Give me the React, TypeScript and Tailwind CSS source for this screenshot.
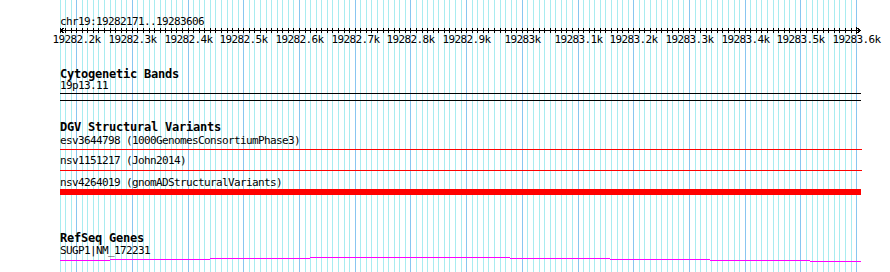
import React from "react";

const START = 19282170;
const SCALE = 0.5571;
const X0 = 60;
const px = (pos: number) => Math.floor(X0 + (pos - START) * SCALE);

const gridPositions = Array.from({ length: 144 }, (_, i) => START + i * 10);
const majorPositions = Array.from({ length: 15 }, (_, i) => 19282200 + i * 100);
const labelFor = (p: number) => {
  const k = p / 1000;
  return p % 1000 === 0 ? `${k}k` : `${k.toFixed(1)}k`;
};

const geneSegments: [number, number, number][] = [
  [60, 110, 4],
  [110, 210, 3],
  [210, 310, 2],
  [310, 410, 1],
  [410, 510, 1],
  [510, 610, 2],
  [610, 710, 3],
  [710, 810, 4],
  [810, 861, 5],
];

const txt = "h-[10px] text-[11px] leading-[10px] tracking-[-0.62px] whitespace-pre";
const ttl = "h-[11px] text-[12px] leading-[11px] tracking-[-0.22px] font-bold whitespace-pre";

export default function App() {
  return (
    <div className="relative w-[890px] h-[272px] bg-white overflow-hidden font-['DejaVu_Sans_Mono',monospace] text-black">
      {/* grid canvas */}
      <svg
        className="absolute inset-0"
        width={890}
        height={272}
        shapeRendering="crispEdges"
      >
        {gridPositions.map((p) => (
          <rect
            key={p}
            x={px(p)}
            y={0}
            width={1}
            height={272}
            fill={p % 100 === 0 ? "#88c6f0" : "#a8ecf0"}
          />
        ))}
      </svg>

      <div className="relative flex flex-col">
        {/* locus */}
        <div className={`mt-[17px] pl-[60px] ${txt}`}>chr19:19282171..19283606</div>
        {/* ruler */}
        <svg width={890} height={8} className="block" shapeRendering="crispEdges">
          <rect x={60} y={3} width={801} height={1} fill="#000" />
          {gridPositions.map((p) => (
            <rect key={p} x={px(p)} y={1} width={1} height={5} fill="#000" />
          ))}
          <path
            d="M60.5 3.5 L64.5 0.5 M60.5 3.5 L64.5 6.5 M860.5 3.5 L856.5 0.5 M860.5 3.5 L856.5 6.5"
            stroke="#000"
            strokeWidth={1}
            fill="none"
          />
        </svg>
        <div className={`relative ${txt}`}>
          {majorPositions.map((p) => (
            <span
              key={p}
              className="absolute top-0 -translate-x-1/2 whitespace-pre"
              style={{ left: px(p) + 0.5 }}
            >
              {labelFor(p)}
            </span>
          ))}
        </div>

        {/* Cytogenetic Bands */}
        <div className={`mt-[24px] pl-[60px] ${ttl}`}>Cytogenetic Bands</div>
        <div className={`mt-[1px] pl-[60px] ${txt}`}>19p13.11</div>
        <div className="ml-[60px] w-[801px] mt-[2px] h-px bg-black" />
        <div className="ml-[60px] w-[801px] mt-[6px] h-px bg-black" />

        {/* DGV */}
        <div className={`mt-[21px] pl-[60px] ${ttl}`}>DGV Structural Variants</div>
        <div className={`mt-[3px] pl-[60px] ${txt}`}>esv3644798 (1000GenomesConsortiumPhase3)</div>
        <div className="ml-[60px] w-[802px] mt-[3px] h-px bg-[#ff0000]" />
        <div className={`mt-[6px] pl-[60px] ${txt}`}>nsv1151217 (John2014)</div>
        <div className="ml-[60px] w-[802px] mt-[4px] h-px bg-[#ff0000]" />
        <div className={`mt-[7px] pl-[60px] ${txt}`}>nsv4264019 (gnomADStructuralVariants)</div>
        <div className="ml-[60px] w-[801px] mt-[1px] h-[6px] bg-[#ff0000]" />

        {/* RefSeq */}
        <div className={`mt-[38px] pl-[60px] ${ttl}`}>RefSeq Genes</div>
        <div className={`mt-[2px] pl-[60px] ${txt}`}>SUGP1|NM_172231</div>
        <svg width={890} height={8} className="block" shapeRendering="crispEdges">
          {geneSegments.map(([a, b, y]) => (
            <rect key={a} x={a} y={y} width={b - a} height={1} fill="#ff00ff" />
          ))}
        </svg>
      </div>
    </div>
  );
}
